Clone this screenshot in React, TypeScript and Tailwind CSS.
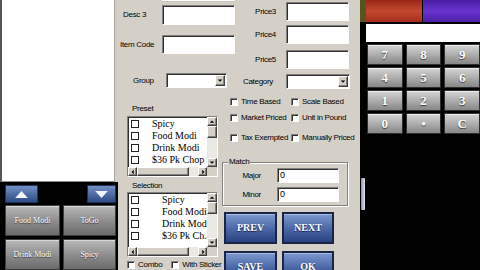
// Item editor screen: modifier list on the left, item form in the middle, keypad on the right

const sans = "font-['Liberation_Sans',Arial,sans-serif]";
const serif = "font-['Liberation_Serif','Times_New_Roman',serif]";
const label = `${sans} text-[8px] leading-none text-black tracking-[-0.3px] whitespace-nowrap`;
const sunken =
  "border border-t-[#808080] border-l-[#808080] border-r-white border-b-white bg-white shadow-[inset_1px_1px_0_#303030]";
const raised =
  "border border-t-white border-l-white border-r-[#404040] border-b-[#404040] bg-[#d4d0c8] shadow-[inset_-1px_-1px_0_#808080]";

function TextBox({ w, h, value }: { w: string; h: string; value?: string }) {
  return (
    <div className={`${sunken} ${w} ${h} flex items-center pl-[2px]`}>
      {value && <span className={`${sans} text-[9px] leading-none`}>{value}</span>}
    </div>
  );
}

function Tri({ dir, cls }: { dir: "up" | "down" | "left" | "right"; cls?: string }) {
  const pts = {
    up: "1,5 4,2 7,5",
    down: "1,2 4,5 7,2",
    left: "5,1 2,4 5,7",
    right: "3,1 6,4 3,7",
  }[dir];
  return (
    <svg viewBox="0 0 8 8" className={cls ?? "h-[6px] w-[6px]"}>
      <polygon points={pts} fill="#000" />
    </svg>
  );
}

function DropDown({ w }: { w: string }) {
  return (
    <div className={`${sunken} ${w} flex h-[15px] justify-end p-[1px]`}>
      <div className={`${raised} flex w-[10px] items-center justify-center`}>
        <Tri dir="down" />
      </div>
    </div>
  );
}

function Check({ size = "h-[8px] w-[8px]" }: { size?: string }) {
  return <div className={`${sunken} ${size} shrink-0`} />;
}

function ListBox({ items, indent, h }: { items: string[]; indent: string; h: string }) {
  return (
    <div className={`${sunken} ${h} flex w-[91px] flex-col`}>
      <div className="flex min-h-0 flex-1">
        <div className="flex-1 overflow-hidden pl-[3px] pt-[1px]">
          {items.map((it) => (
            <div key={it} className="flex h-[12px] items-center">
              <div className="h-[8px] w-[8px] shrink-0 border border-[#222] bg-white" />
              <span className={`${serif} ${indent} text-[10px] leading-none whitespace-nowrap`}>{it}</span>
            </div>
          ))}
        </div>
        <div className="flex w-[10px] flex-col bg-[#ebe9e4]">
          <div className={`${raised} flex h-[9px] items-center justify-center`}>
            <Tri dir="up" />
          </div>
          <div className={`${raised} h-[12px]`} />
          <div className="flex-1" />
          <div className={`${raised} flex h-[9px] items-center justify-center`}>
            <Tri dir="down" />
          </div>
        </div>
      </div>
      <div className="flex h-[9px] bg-[#ebe9e4]">
        <div className={`${raised} flex w-[9px] items-center justify-center`}>
          <Tri dir="left" />
        </div>
        <div className={`${raised} w-[52px]`} />
        <div className="flex-1" />
        <div className={`${raised} flex w-[9px] items-center justify-center`}>
          <Tri dir="right" />
        </div>
        <div className="w-[10px] bg-[#d4d0c8]" />
      </div>
    </div>
  );
}

function BlueBtn({ text, w }: { text: string; w: string }) {
  return (
    <div
      className={`${w} flex h-[32px] items-center justify-center border-2 border-[#1a2444] bg-linear-to-b from-[#7f9ad0] via-[#4d69a8] to-[#2a4282] shadow-[inset_0_1px_0_#a9bce4]`}
    >
      <span className={`${serif} text-[10px] font-bold leading-none text-white [text-shadow:0_1px_1px_#13204a]`}>
        {text}
      </span>
    </div>
  );
}

function GrayBtn({ text }: { text: string }) {
  return (
    <div className="flex h-[31px] items-center justify-center border border-[#3c3c3c] bg-linear-to-b from-[#b9b9b9] via-[#8f8f8f] to-[#6a6a6a] shadow-[inset_0_1px_0_#d8d8d8]">
      <span className={`${serif} text-[8px] leading-none text-white [text-shadow:0_1px_1px_#333]`}>{text}</span>
    </div>
  );
}

function ArrowBtn({ dir, w }: { dir: "up" | "down"; w: string }) {
  return (
    <div
      className={`${w} flex h-[18px] items-center justify-center border border-[#20305a] bg-linear-to-b from-[#7390c6] to-[#2f4b83]`}
    >
      <svg viewBox="0 0 16 10" className="h-[9px] w-[15px]">
        <polygon points={dir === "up" ? "1,9 8,1 15,9" : "1,1 8,9 15,1"} fill="#f4f6fb" />
      </svg>
    </div>
  );
}

function LeftPanel() {
  return (
    <div className="flex w-[118px] shrink-0 flex-col bg-black">
      <div className="flex h-[189px] bg-[#d2cec6] pr-[3px]">
        <div className="flex-1 border-l-2 border-r border-b border-l-[#555] border-r-[#a9a6a0] border-b-[#8a8a8a] bg-white" />
      </div>
      <div className="flex items-start justify-between pl-[5px] pr-[2px] pt-[3px]">
        <ArrowBtn dir="up" w="w-[33px]" />
        <ArrowBtn dir="down" w="w-[29px]" />
      </div>
      <div className="mt-[2px] grid grid-cols-[55px_53px] gap-[3px] pl-[5px]">
        <GrayBtn text="Food Modi" />
        <GrayBtn text="ToGo" />
        <GrayBtn text="Drink Modi" />
        <GrayBtn text="Spicy" />
      </div>
    </div>
  );
}

function PriceRow({ name, mt }: { name: string; mt: string }) {
  return (
    <div className={`${mt} flex h-[19px] items-center`}>
      <div className={`${label} w-[36px] text-right`}>{name}</div>
      <div className="ml-[10px]">
        <TextBox w="w-[63px]" h="h-[19px]" />
      </div>
    </div>
  );
}

function CheckItem({ text }: { text: string }) {
  return (
    <div className="flex items-center gap-[3px]">
      <Check />
      <span className={label}>{text}</span>
    </div>
  );
}

function MiddlePanel() {
  return (
    <div className="flex w-[242px] shrink-0 flex-col bg-[#d4d0c8]">
      <div className="flex h-[90px]">
        <div className="w-[122px]">
          <div className="ml-[44px] h-[2px] w-[73px] border-b border-[#c9c6bf] bg-white" />
          <div className="mt-[3px] flex h-[20px] items-center">
            <div className={`${label} w-[44px] pl-[5px]`}>Desc 3</div>
            <TextBox w="w-[73px]" h="h-[20px]" />
          </div>
          <div className="mt-[10px] flex h-[19px] items-center">
            <div className={`${label} w-[44px] pl-[2px]`}>Item Code</div>
            <TextBox w="w-[73px]" h="h-[19px]" />
          </div>
          <div className="mt-[19px] flex h-[15px] items-center">
            <div className={`${label} w-[48px] pl-[15px]`}>Group</div>
            <DropDown w="w-[61px]" />
          </div>
        </div>
        <div className="w-[120px]">
          <div className="h-[2px]" />
          <PriceRow name="Price3" mt="mt-0" />
          <PriceRow name="Price4" mt="mt-[4px]" />
          <PriceRow name="Price5" mt="mt-[6px]" />
          <div className="mt-[5px] flex h-[15px] items-center">
            <div className={`${label} w-[33px] text-right`}>Category</div>
            <div className="ml-[13px]">
              <DropDown w="w-[64px]" />
            </div>
          </div>
        </div>
      </div>

      <div className="flex flex-1">
        <div className="w-[104px] pl-[9px]">
          <div className={`${label} mt-[16px] h-[9px] pl-[5px]`}>Preset</div>
          <div className="mt-[2px]">
            <ListBox
              h="h-[61px]"
              indent="ml-[13px]"
              items={["Spicy", "Food Modi", "Drink Modi", "$36 Pk Chop ..."]}
            />
          </div>
          <div className={`${label} mt-[5px] h-[9px] pl-[5px]`}>Selection</div>
          <div className="mt-[1px]">
            <ListBox
              h="h-[65px]"
              indent="ml-[23px]"
              items={["Spicy", "Food Modi", "Drink Modi", "$36 Pk Ch..."]}
            />
          </div>
          <div className="mt-[4px] flex items-center gap-[9px]">
            <CheckItem text="Combo" />
            <CheckItem text="With Sticker" />
          </div>
        </div>

        <div className="w-[138px]">
          <div className="mt-[9px] grid h-[8px] grid-cols-[61px_1fr] pl-[8px]">
            <CheckItem text="Time Based" />
            <CheckItem text="Scale Based" />
          </div>
          <div className="mt-[8px] grid h-[8px] grid-cols-[61px_1fr] pl-[8px]">
            <CheckItem text="Market Priced" />
            <CheckItem text="Unit in Pound" />
          </div>
          <div className="mt-[12px] grid h-[8px] grid-cols-[61px_1fr] pl-[8px]">
            <CheckItem text="Tax Exempted" />
            <CheckItem text="Manually Priced" />
          </div>

          <div className="relative mt-[20px] h-[44px] w-[126px] border border-[#808080] shadow-[1px_1px_0_#fff,inset_1px_1px_0_#fff]">
            <span className={`${label} absolute -top-[5px] left-[5px] bg-[#d4d0c8] px-[1px]`}>Match</span>
            <div className="mt-[5px] flex h-[15px] items-center">
              <div className={`${label} w-[38px] text-right`}>Major</div>
              <div className="ml-[16px]">
                <TextBox w="w-[62px]" h="h-[15px]" value="0" />
              </div>
            </div>
            <div className="mt-[4px] flex h-[15px] items-center">
              <div className={`${label} w-[38px] text-right`}>Minor</div>
              <div className="ml-[16px]">
                <TextBox w="w-[62px]" h="h-[15px]" value="0" />
              </div>
            </div>
          </div>

          <div className="mt-[6px] grid grid-cols-[53px_52px] gap-x-[5px] gap-y-[7px] pl-[2px]">
            <BlueBtn text="PREV" w="w-[53px]" />
            <BlueBtn text="NEXT" w="w-[52px]" />
            <BlueBtn text="SAVE" w="w-[53px]" />
            <BlueBtn text="OK" w="w-[52px]" />
          </div>
        </div>
      </div>
    </div>
  );
}

function Key({ k }: { k: string }) {
  return (
    <div className="flex h-[21px] items-center justify-center border border-[#2e2e2e] bg-linear-to-b from-[#d6d6d6] via-[#aeaeae] to-[#878787] shadow-[inset_0_1px_0_#eee]">
      <span className={`${serif} text-[13px] font-bold leading-none text-white [text-shadow:0_1px_1px_#333]`}>{k}</span>
    </div>
  );
}

function RightPanel() {
  const keys = ["7", "8", "9", "4", "5", "6", "1", "2", "3", "0", "•", "C"];
  return (
    <div className="flex w-[120px] shrink-0 bg-black">
      <div className="flex w-[6px] flex-col">
        <div className="h-[22px] bg-[#56541f]" />
        <div className="ml-[1px] mt-[156px] h-[32px] w-[4px] rounded-[1px] bg-linear-to-r from-[#8e93a8] to-[#dfe2ee]" />
      </div>
      <div className="flex flex-1 flex-col">
        <div className="flex h-[22px] gap-[1px]">
          <div className="w-[56px] bg-linear-to-b from-[#9a2616] via-[#c44a30] to-[#a52c1c]" />
          <div className="flex-1 bg-linear-to-b from-[#4a1ea6] via-[#6934cf] to-[#4b1fa6]" />
        </div>
        <div className="mt-[2px] h-[18px] bg-white" />
        <div className="mt-[2px] grid grid-cols-3 gap-x-[3px] gap-y-[2px] pl-[1px]">
          {keys.map((k) => (
            <Key key={k} k={k} />
          ))}
        </div>
      </div>
    </div>
  );
}

export default function App() {
  return (
    <div className="flex h-[270px] w-[480px] overflow-hidden bg-black">
      <LeftPanel />
      <MiddlePanel />
      <RightPanel />
    </div>
  );
}
